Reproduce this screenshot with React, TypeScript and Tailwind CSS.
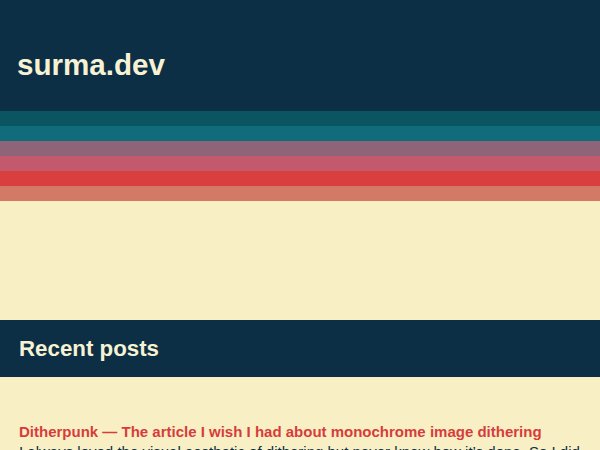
import React from 'react';

const stripes = ['bg-[#0b5562]', 'bg-[#106b7b]', 'bg-[#8f6479]', 'bg-[#c2596c]', 'bg-[#da3f3f]', 'bg-[#d37a67]'];

const App: React.FC = () => {
    return (
        <div className="min-h-[450px] bg-[#f8f0c4] font-['Liberation_Sans',Arial,sans-serif]">
            <header className="h-[111px] bg-[#0c2f45] px-[17px] pt-[50px]">
                <h1 className="text-[29.6px] font-bold leading-none text-[#f8f2d4]">surma.dev</h1>
            </header>
            <div className="flex flex-col">
                {stripes.map((c) => (
                    <div key={c} className={`h-[15px] ${c}`} />
                ))}
            </div>
            <div className="h-[119px]" />
            <section className="h-[57px] bg-[#0c2f45] px-[19px] pt-[18px]">
                <h2 className="text-[22.3px] font-bold leading-none text-[#f8f2d4]">Recent posts</h2>
            </section>
            <div className="px-[19px] pt-[45px]">
                <a className="block text-[15px] font-bold leading-[20px] text-[#d73c3c]">
                    Ditherpunk — The article I wish I had about monochrome image dithering
                </a>
                <p className="text-[15px] leading-[20px] text-[#0c2f45]">
                    I always loved the visual aesthetic of dithering but never knew how it’s done. So I did some research.
                </p>
            </div>
        </div>
    );
};

export default App;
